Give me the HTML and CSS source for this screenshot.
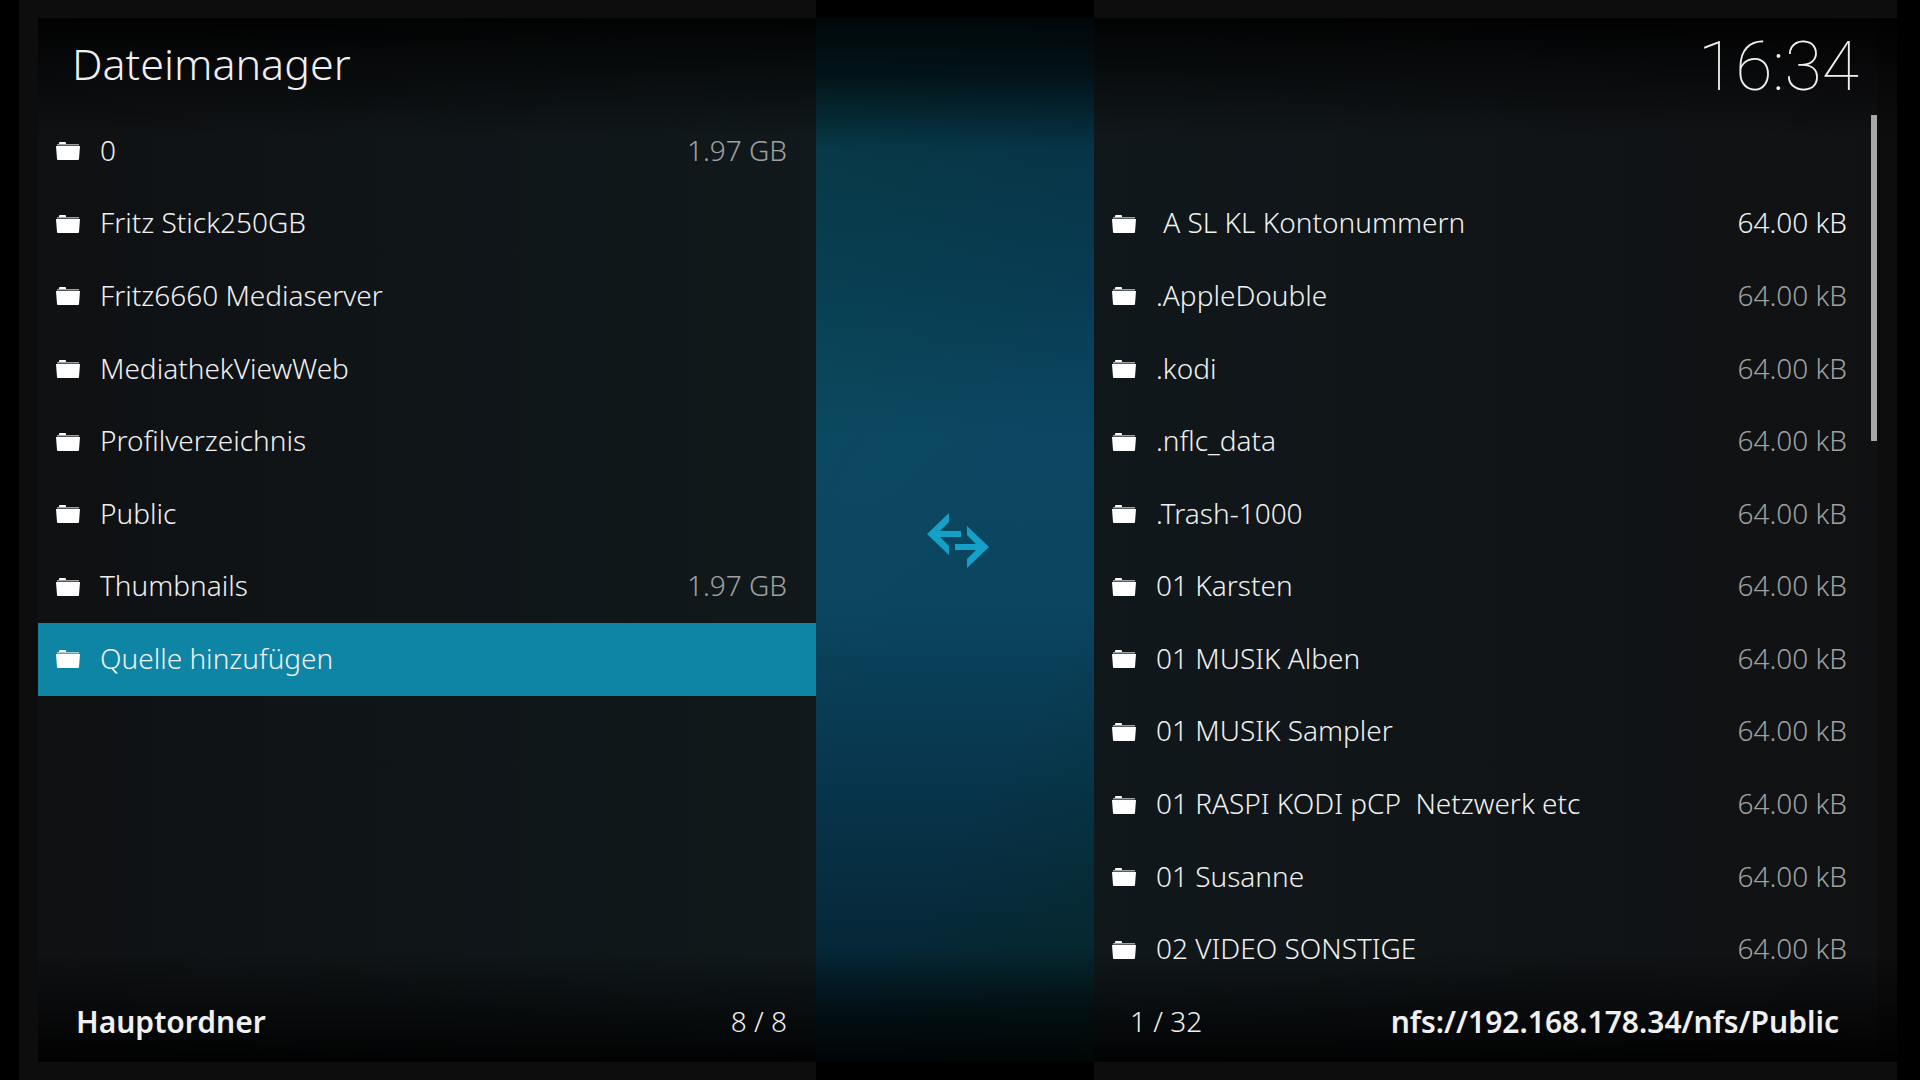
FILE: index.html
```html
<!DOCTYPE html>
<html lang="de">
<head>
    <meta charset="UTF-8">
    <meta name="viewport" content="width=device-width, initial-scale=1.0">
    <title>Dateimanager</title>
    <link rel="stylesheet" href="styles.css">
</head>
<body>

    <svg width="0" height="0" class="sprites">
        <symbol id="folder" viewBox="0 0 24 20">
            <path d="M1 3 H23 V4 H1 Z" fill="#fff" fill-opacity="0.6"/>
            <path d="M1 4 H23 V5 H1 Z" fill="#fff" fill-opacity="0.3"/>
            <path d="M3 3 V2 Q3 1 4 1 H9 Q10 1 10 2 V3 Z" fill="#fff"/>
            <path d="M0 5 H24 L23 18 Q23 19 22 19 H2 Q1 19 1 18 Z" fill="#fff"/>
        </symbol>
    </svg>

    <div class="screen">
        <section class="panel panel-left">
            <div class="panel-body">
                <header>
                    <h1>Dateimanager</h1>
                </header>
                <div class="files">
                    <button class="file"><svg><use href="#folder"/></svg><span class="name">0</span><span class="size">1.97 GB</span></button>
                    <button class="file"><svg><use href="#folder"/></svg><span class="name">Fritz Stick250GB</span></button>
                    <button class="file"><svg><use href="#folder"/></svg><span class="name">Fritz6660 Mediaserver</span></button>
                    <button class="file"><svg><use href="#folder"/></svg><span class="name">MediathekViewWeb</span></button>
                    <button class="file"><svg><use href="#folder"/></svg><span class="name">Profilverzeichnis</span></button>
                    <button class="file"><svg><use href="#folder"/></svg><span class="name">Public</span></button>
                    <button class="file"><svg><use href="#folder"/></svg><span class="name">Thumbnails</span><span class="size">1.97 GB</span></button>
                    <button class="file selected"><svg><use href="#folder"/></svg><span class="name">Quelle hinzufügen</span></button>
                </div>
                <footer>
                    <span class="path">Hauptordner</span>
                    <span class="count">8 / 8</span>
                </footer>
            </div>
        </section>

        <div class="middle">
            <button class="switch" aria-label="Seite wechseln">
                <svg viewBox="0 0 62 56">
                    <path d="M22 0 V9 L13 18 H34 V24 H13 L22 33 V42 L0 21 Z"/>
                    <path d="M40 13 V22 L49 31 H28 V37 H49 L40 46 V55 L62 34 Z"/>
                </svg>
            </button>
        </div>

        <section class="panel panel-right">
            <div class="panel-body">
                <header>
                    <time>16:34</time>
                </header>
                <div class="files">
                    <button class="file" aria-label="Übergeordneter Ordner"></button>
                    <button class="file current"><svg><use href="#folder"/></svg><span class="name"> A SL KL Kontonummern</span><span class="size">64.00 kB</span></button>
                    <button class="file"><svg><use href="#folder"/></svg><span class="name">.AppleDouble</span><span class="size">64.00 kB</span></button>
                    <button class="file"><svg><use href="#folder"/></svg><span class="name">.kodi</span><span class="size">64.00 kB</span></button>
                    <button class="file"><svg><use href="#folder"/></svg><span class="name">.nflc_data</span><span class="size">64.00 kB</span></button>
                    <button class="file"><svg><use href="#folder"/></svg><span class="name">.Trash-1000</span><span class="size">64.00 kB</span></button>
                    <button class="file"><svg><use href="#folder"/></svg><span class="name">01 Karsten</span><span class="size">64.00 kB</span></button>
                    <button class="file"><svg><use href="#folder"/></svg><span class="name">01 MUSIK Alben</span><span class="size">64.00 kB</span></button>
                    <button class="file"><svg><use href="#folder"/></svg><span class="name">01 MUSIK Sampler</span><span class="size">64.00 kB</span></button>
                    <button class="file"><svg><use href="#folder"/></svg><span class="name">01 RASPI KODI pCP  Netzwerk etc</span><span class="size">64.00 kB</span></button>
                    <button class="file"><svg><use href="#folder"/></svg><span class="name">01 Susanne</span><span class="size">64.00 kB</span></button>
                    <button class="file"><svg><use href="#folder"/></svg><span class="name">02 VIDEO SONSTIGE</span><span class="size">64.00 kB</span></button>
                    <div class="scrollbar"></div>
                </div>
                <footer>
                    <span class="count">1 / 32</span>
                    <span class="path">nfs://192.168.178.34/nfs/Public</span>
                </footer>
            </div>
        </section>
    </div>

</body>
</html>
```

FILE: styles.css
```css
* {
    box-sizing: border-box;
}
body {
    margin: 0;
    background-color: #000000;
    color: #f0f0f0;
    font-family: "Noto Sans", "Open Sans", sans-serif;
    font-size: 28px;
    font-weight: 300;
}
.sprites {
    position: absolute;
}
.screen {
    display: grid;
    grid-template-columns: 797fr 278fr 803fr;
    min-height: 100vh;
    padding: 0 23px 0 19px;
}
.panel {
    display: flex;
    padding: 18px 0;
    background-color: #0d0d0d;
}
.panel-left {
    padding-left: 19px;
}
.panel-body {
    flex: 1;
    display: grid;
    grid-template-rows: 97px 1fr 76px;
    background:
        linear-gradient(rgba(0, 0, 0, 0.9), rgba(0, 0, 0, 0) 120px),
        linear-gradient(to top, rgba(0, 0, 0, 0.9), rgba(0, 0, 0, 0) 110px),
        linear-gradient(90deg, #0f1113, #10191c);
}
.panel-right .panel-body {
    background:
        linear-gradient(rgba(0, 0, 0, 0.9), rgba(0, 0, 0, 0) 120px),
        linear-gradient(to top, rgba(0, 0, 0, 0.9), rgba(0, 0, 0, 0) 110px),
        linear-gradient(90deg, #10181b, #101113) left / calc(100% - 20px) 100% no-repeat;
}
header {
    display: flex;
    align-items: center;
    padding: 0 38px 0 34px;
}
h1 {
    margin: 0;
    padding-bottom: 5px;
    font-size: 43px;
    font-weight: 300;
    line-height: 56px;
}
time {
    margin-left: auto;
    font-family: Roboto, sans-serif;
    font-size: 68px;
    font-weight: 100;
    line-height: 80px;
}
.files {
    position: relative;
    display: grid;
    grid-template-rows: repeat(12, 1fr);
}
.file {
    display: flex;
    align-items: center;
    gap: 20px;
    padding: 0 29px 0 18px;
    border: none;
    background: none;
    color: inherit;
    font: inherit;
    text-align: left;
    white-space: pre;
    cursor: pointer;
}
.panel-right .file {
    padding-right: 50px;
}
.file svg {
    width: 24px;
    height: 20px;
}
.name,
.size {
    padding-bottom: 3px;
}
.size {
    margin-left: auto;
    color: #a0a0a0;
}
.current .size {
    color: inherit;
}
.selected {
    background-color: #0f85a5;
}
.scrollbar {
    position: absolute;
    top: 0;
    right: 20px;
    width: 6px;
    height: 326px;
    background-color: #a8a8a8;
}
footer {
    display: flex;
    align-items: center;
    justify-content: space-between;
    padding: 0 29px 6px 38px;
}
.panel-right footer {
    padding-right: 58px;
    padding-left: 36px;
}
.path {
    font-size: 30px;
    font-weight: 600;
}
.middle {
    display: flex;
    align-items: center;
    justify-content: center;
    margin: 18px 0;
    padding: 2px 0 0 6px;
    background:
        linear-gradient(rgba(0, 0, 0, 0.85), rgba(0, 0, 0, 0.6) 60px, rgba(0, 0, 0, 0) 130px),
        linear-gradient(to top, rgba(0, 0, 0, 0.85), rgba(0, 0, 0, 0.6) 50px, rgba(0, 0, 0, 0) 115px),
        linear-gradient(120deg, rgba(10, 100, 70, 0.15), rgba(10, 100, 70, 0) 50%),
        linear-gradient(300deg, rgba(5, 40, 20, 0.3), rgba(5, 40, 20, 0) 30%),
        linear-gradient(#062a3c, #083b52 25%, #0b4762 40%, #0b4661 55%, #083850 70%, #06293a 87%, #05222e);
}
.switch {
    padding: 0;
    border: none;
    background: none;
    cursor: pointer;
}
.switch svg {
    display: block;
    width: 62px;
    height: 56px;
    fill: #15a0c8;
}
```
